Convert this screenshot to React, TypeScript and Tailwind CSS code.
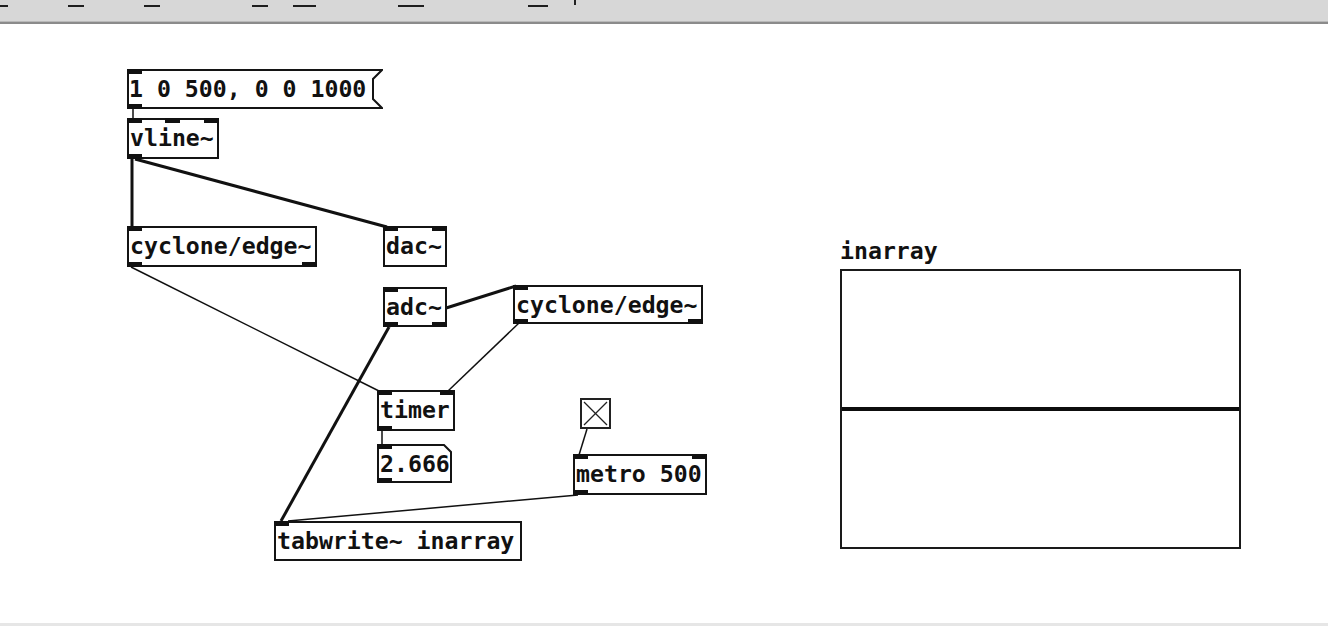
import React from 'react';

// Pd patch window: cut-off menu bar + canvas with boxes and patch cords

type Side = 'l' | 'm' | 'r';

interface PdBox {
    id: string;
    text: string;
    pos: string; // position + size classes
    ins: Side[];
    outs: Side[];
}

const inletCls: Record<Side, string> = {
    l: 'absolute -left-[2px] -top-[2px] w-[15px] h-[5px] bg-[#111]',
    m: 'absolute left-[36px] -top-[2px] w-[15px] h-[5px] bg-[#111]',
    r: 'absolute -right-[2px] -top-[2px] w-[15px] h-[5px] bg-[#111]',
};

const outletCls: Record<Side, string> = {
    l: 'absolute -left-[2px] -bottom-[2px] w-[15px] h-[5px] bg-[#111]',
    m: 'absolute left-[36px] -bottom-[2px] w-[15px] h-[5px] bg-[#111]',
    r: 'absolute -right-[2px] -bottom-[2px] w-[15px] h-[5px] bg-[#111]',
};

const boxes: PdBox[] = [
    { id: 'vline', text: 'vline~', pos: 'left-[127px] top-[94px] w-[92px] h-[41px]', ins: ['l', 'm', 'r'], outs: ['l'] },
    { id: 'edge1', text: 'cyclone/edge~', pos: 'left-[127px] top-[202px] w-[190px] h-[41px]', ins: ['l'], outs: ['l', 'r'] },
    { id: 'dac', text: 'dac~', pos: 'left-[383px] top-[202px] w-[64px] h-[41px]', ins: ['l', 'r'], outs: [] },
    { id: 'adc', text: 'adc~', pos: 'left-[383px] top-[263px] w-[64px] h-[40px]', ins: ['l'], outs: ['l', 'r'] },
    { id: 'edge2', text: 'cyclone/edge~', pos: 'left-[513px] top-[261px] w-[190px] h-[39px]', ins: ['l'], outs: ['l', 'r'] },
    { id: 'timer', text: 'timer', pos: 'left-[377px] top-[366px] w-[78px] h-[41px]', ins: ['l', 'r'], outs: ['l'] },
    { id: 'metro', text: 'metro 500', pos: 'left-[573px] top-[430px] w-[134px] h-[41px]', ins: ['l', 'r'], outs: ['l'] },
    { id: 'tabwrite', text: 'tabwrite~ inarray', pos: 'left-[274px] top-[497px] w-[248px] h-[40px]', ins: ['l'], outs: [] },
];

// [x1, y1, x2, y2, signal?]
const cords: [number, number, number, number, boolean][] = [
    [133, 84, 133, 95, false],
    [132, 135, 132, 203, true],
    [135, 135, 387, 203, true],
    [131, 243, 379, 367, false],
    [389, 302, 516, 262, true],
    [389, 303, 281, 497, true],
    [519, 299, 448, 367, false],
    [382, 407, 382, 421, false],
    [587, 405, 579, 431, false],
    [578, 471, 288, 497, false],
];

const menus = [
    { label: 'File', item: 'w-[68px]', ul: 'w-[8px]' },
    { label: 'Edit', item: 'w-[76px]', ul: 'w-[16px]' },
    { label: 'Put', item: 'w-[108px]', ul: 'w-[16px]' },
    { label: 'Find', item: 'w-[41px]', ul: 'w-[16px]' },
    { label: 'Media', item: 'w-[105px]', ul: 'w-[23px]' },
    { label: 'Window', item: 'w-[130px]', ul: 'w-[26px]' },
    { label: 'Help', item: 'w-[60px]', ul: 'w-[20px]' },
];

function MenuBar() {
    return (
        <div className="shrink-0">
            <div className="h-[21px] bg-[#d7d7d7] overflow-hidden flex font-['Liberation_Sans',sans-serif] text-[15px]">
                {menus.map(m => (
                    <div key={m.label} className={`${m.item} shrink-0 relative`}>
                        <span className="block -mt-[24px] h-[20px] leading-[20px] text-[#222]">{m.label}</span>
                        <div className={`${m.ul} h-[2px] mt-[9px] bg-[#1e1e1e]`} />
                        {m.label === 'Help' && <div className="absolute left-[46px] top-0 w-[2px] h-[5px] bg-[#222]" />}
                    </div>
                ))}
            </div>
            <div className="h-[1px] bg-[#b9b9b9]" />
            <div className="h-[2px] bg-[#8b8b8b]" />
        </div>
    );
}

function ObjectBox({ b }: { b: PdBox }) {
    return (
        <div className={`absolute ${b.pos} border-2 border-[#141414] bg-white pl-[1px] leading-[36px] whitespace-nowrap`}>
            {b.text}
            {b.ins.map(s => <div key={'i' + s} className={inletCls[s]} />)}
            {b.outs.map(s => <div key={'o' + s} className={outletCls[s]} />)}
        </div>
    );
}

export default function App() {
    return (
        <div className="w-[1328px] h-[626px] flex flex-col bg-white overflow-hidden">
            <MenuBar />

            <div className="flex-1 relative font-['DejaVu_Sans_Mono',monospace] font-bold text-[23.2px] text-[#111]">
                {/* patch cords */}
                <svg className="absolute inset-0 w-full h-full" width="1328" height="599">
                    {cords.map(([x1, y1, x2, y2, sig], i) => (
                        <line key={i} x1={x1} y1={y1} x2={x2} y2={y2} stroke="#111" strokeWidth={sig ? 3 : 1.5} />
                    ))}
                </svg>

                {/* message box */}
                <div className="absolute left-[127px] top-[45px] w-[256px] h-[40px] pl-[2px] leading-[39px] whitespace-nowrap">
                    <svg className="absolute inset-0" width="256" height="40">
                        <path d="M1 1 H255 L246 10 V30 L255 39 H1 Z" fill="white" stroke="#141414" strokeWidth="2" />
                        <rect x="0" y="0" width="15" height="5" fill="#111" />
                        <rect x="0" y="35" width="15" height="5" fill="#111" />
                    </svg>
                    <span className="relative">1 0 500, 0 0 1000</span>
                </div>

                {boxes.map(b => <ObjectBox key={b.id} b={b} />)}

                {/* number box */}
                <div className="absolute left-[377px] top-[420px] w-[75px] h-[39px] pl-[3px] leading-[39px]">
                    <svg className="absolute inset-0" width="75" height="39">
                        <path d="M1 1 H67 L74 8 V38 H1 Z" fill="white" stroke="#141414" strokeWidth="2" />
                        <rect x="0" y="0" width="15" height="5" fill="#111" />
                        <rect x="0" y="34" width="15" height="5" fill="#111" />
                    </svg>
                    <span className="relative">2.666</span>
                </div>

                {/* toggle */}
                <div className="absolute left-[580px] top-[374px] w-[31px] h-[31px] border-2 border-[#222] bg-white">
                    <svg className="absolute inset-0" width="27" height="27">
                        <line x1="2" y1="2" x2="25" y2="25" stroke="#222" strokeWidth="1.2" />
                        <line x1="25" y1="2" x2="2" y2="25" stroke="#222" strokeWidth="1.2" />
                    </svg>
                </div>

                {/* array graph */}
                <div className="absolute left-[840px] top-[213px] flex flex-col">
                    <div className="leading-[27px] h-[27px]">inarray</div>
                    <div className="mt-[5px] w-[401px] h-[280px] border-2 border-[#1a1a1a] flex flex-col">
                        <div className="h-[136px]" />
                        <div className="h-[4px] bg-[#0d0d0d]" />
                        <div className="flex-1" />
                    </div>
                </div>
            </div>

            <div className="h-[3px] bg-[#e6e6e6] shrink-0" />
        </div>
    );
}
